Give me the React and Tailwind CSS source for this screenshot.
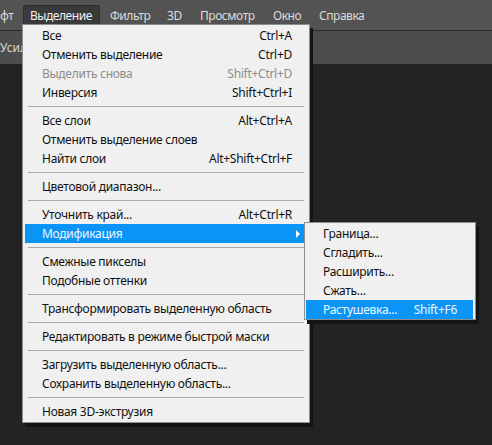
import React from 'react';

const menuGroups = [
  [
    { label: 'Все', shortcut: 'Ctrl+A' },
    { label: 'Отменить выделение', shortcut: 'Ctrl+D' },
    { label: 'Выделить снова', shortcut: 'Shift+Ctrl+D', disabled: true },
    { label: 'Инверсия', shortcut: 'Shift+Ctrl+I' },
  ],
  [
    { label: 'Все слои', shortcut: 'Alt+Ctrl+A' },
    { label: 'Отменить выделение слоев' },
    { label: 'Найти слои', shortcut: 'Alt+Shift+Ctrl+F' },
  ],
  [{ label: 'Цветовой диапазон...' }],
  [
    { label: 'Уточнить край...', shortcut: 'Alt+Ctrl+R' },
    { label: 'Модификация', active: true, submenu: true },
  ],
  [{ label: 'Смежные пикселы' }, { label: 'Подобные оттенки' }],
  [{ label: 'Трансформировать выделенную область' }],
  [{ label: 'Редактировать в режиме быстрой маски' }],
  [
    { label: 'Загрузить выделенную область...' },
    { label: 'Сохранить выделенную область...' },
  ],
  [{ label: 'Новая 3D-экструзия' }],
];

const subItems = [
  { label: 'Граница...' },
  { label: 'Сгладить...' },
  { label: 'Расширить...' },
  { label: 'Сжать...' },
  { label: 'Растушевка...', shortcut: 'Shift+F6', active: true },
];

const MenuRow = ({ item }) => (
  <div
    className={`relative flex h-[19px] items-center justify-between pl-[17px] pr-[13px] ${
      item.active ? 'bg-[#0a95f6] text-[#eef7ff]' : item.disabled ? 'text-[#8d8d8d]' : 'text-[#111]'
    }`}
  >
    <span>{item.label}</span>
    {item.shortcut && <span>{item.shortcut}</span>}
    {item.submenu && (
      <span className="absolute right-[5px] top-[6px] h-0 w-0 border-y-[4px] border-l-[4px] border-y-transparent border-l-white" />
    )}
  </div>
);

const Separator = () => (
  <div className="flex h-[9px] items-center pl-[3px] pr-[1px]">
    <div className="h-px w-full bg-[#a9a9a9]" />
  </div>
);

export default function App() {
  return (
    <div
      className="relative h-[445px] w-[492px] overflow-hidden bg-[#232323] text-[12px]"
      style={{ fontFamily: '"Noto Sans", "Open Sans", sans-serif' }}
    >
      {/* menu bar */}
      <div className="flex h-[30px] items-center bg-[#535353] pt-[2px] text-[#dcdcdc] tracking-[-0.45px]">
        <span className="w-[23px]">фт</span>
        <span className="flex h-[22px] w-[77px] items-center rounded-[2px] border border-[#2e2e2e] bg-[#3a3a3a] pl-[6px] text-[#f0f0f0]">
          Выделение
        </span>
        <span className="ml-[10px] w-[57px]">Фильтр</span>
        <span className="w-[33px]">3D</span>
        <span className="w-[73px]">Просмотр</span>
        <span className="w-[46px]">Окно</span>
        <span>Справка</span>
      </div>
      <div className="h-px bg-[#2b2b2b]" />
      {/* options bar */}
      <div className="flex h-[33px] items-center bg-[#4d4d4d] text-[#d8d8d8]">
        <span className="w-[22px] overflow-hidden whitespace-nowrap">Усили</span>
        <div className="ml-[289px] h-[28px] w-px bg-[#5e5e5e]" />
      </div>

      {/* dropdown */}
      <div className="absolute left-[22px] top-[24px] w-[288px] border border-[#8e8e8e] bg-[#f0f0f0] py-[1px] pl-[2px] pr-[4px] tracking-[-0.28px] shadow-[3px_4px_0_#141414]">
        {menuGroups.map((group, gi) => (
          <div key={gi}>
            {gi > 0 && <Separator />}
            {group.map((item) => (
              <MenuRow key={item.label} item={item} />
            ))}
          </div>
        ))}
      </div>

      {/* submenu */}
      <div className="absolute left-[304px] top-[222px] w-[172px] border border-[#8e8e8e] bg-[#f0f0f0] pl-[1px] pr-[2px] pt-[1px] tracking-[-0.28px] shadow-[3px_4px_0_#141414]">
        {subItems.map((item) => (
          <div
            key={item.label}
            className={`flex h-[19px] items-center justify-between pl-[17px] pr-[16px] ${
              item.active ? 'bg-[#0a95f6] text-[#eef7ff]' : 'text-[#111]'
            }`}
          >
            <span>{item.label}</span>
            {item.shortcut && <span>{item.shortcut}</span>}
          </div>
        ))}
      </div>
    </div>
  );
}
